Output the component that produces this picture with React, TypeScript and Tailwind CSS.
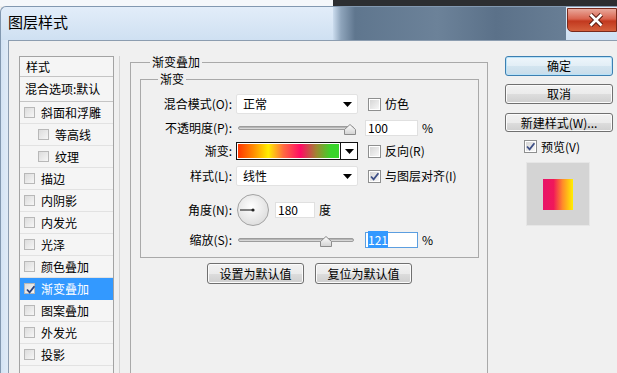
import React from "react";

const font = "font-['Noto_Sans_CJK_SC','Noto_Sans',sans-serif]";

function Arrow() {
  return (
    <svg width="9" height="5" viewBox="0 0 9 5">
      <polygon points="0,0 9,0 4.5,5" fill="#000" />
    </svg>
  );
}

function Tick({ color = "#3d4f86" }: { color?: string }) {
  return (
    <svg width="11" height="11" viewBox="0 0 11 11" className="absolute left-[0px] top-[0px]">
      <path d="M2 5.5 L4.6 8.3 L9.4 2.2" fill="none" stroke={color} strokeWidth="1.8" />
    </svg>
  );
}

function Check({ checked, small }: { checked?: boolean; small?: boolean }) {
  if (small) {
    return (
      <span className="relative block h-[11px] w-[11px] shrink-0 border border-[#b8b8b8] bg-[linear-gradient(135deg,#dcdcdc,#f6f6f6)]">
        {checked && <Tick color="#2a3f7a" />}
      </span>
    );
  }
  return (
    <span className="relative flex h-[13px] w-[13px] shrink-0 items-center justify-center border border-[#8e8f8f] bg-white p-[1px]">
      <span className="block h-full w-full bg-[linear-gradient(135deg,#d6d6d6,#f7f7f7)]" />
      {checked && <Tick />}
    </span>
  );
}

function Thumb({ left }: { left: string }) {
  return (
    <svg width="12" height="11" viewBox="0 0 12 11" className={`absolute top-[4px] ${left}`}>
      <defs>
        <linearGradient id="th" x1="0" y1="0" x2="0" y2="1">
          <stop offset="0" stopColor="#ffffff" />
          <stop offset="1" stopColor="#d2d2d2" />
        </linearGradient>
      </defs>
      <path d="M0.5 10.5 V5.5 L6 0.5 L11.5 5.5 V10.5 Z" fill="url(#th)" stroke="#8c8c8c" />
    </svg>
  );
}

function Slider({ left }: { left: string }) {
  return (
    <div className="relative flex h-[16px] w-[122px] items-center pl-[2px]">
      <div className="h-[4px] w-[116px] rounded-full border border-[#9c9c9c] bg-[linear-gradient(180deg,#a4a4a4,#e8e8e8)]" />
      <Thumb left={left} />
    </div>
  );
}

function Select({ value }: { value: string }) {
  return (
    <div className="flex h-[20px] w-[122px] items-center justify-between rounded-[2px] border border-[#e2e2e2] bg-white pl-[6px] pr-[5px] leading-none">
      <span>{value}</span>
      <Arrow />
    </div>
  );
}

function Btn({ children, w, h = "h-[21px]", focus }: { children: React.ReactNode; w: string; h?: string; focus?: boolean }) {
  return (
    <div
      className={`flex ${h} ${w} items-center justify-center rounded-[3px] border leading-none ${
        focus
          ? "border-[#3c7fb1] bg-[linear-gradient(180deg,#eef6fb_0%,#e2eef6_50%,#d3e5f0_51%,#c8dcea_100%)] shadow-[inset_0_0_0_1px_#b8e2f8]"
          : "border-[#707070] bg-[linear-gradient(180deg,#f2f2f2_0%,#ebebeb_50%,#dddddd_51%,#cfcfcf_100%)] shadow-[inset_0_0_0_1px_#fbfbfb]"
      }`}
    >
      {children}
    </div>
  );
}

const layers: { t: string; indent?: boolean; on?: boolean }[] = [
  { t: "斜面和浮雕" },
  { t: "等高线", indent: true },
  { t: "纹理", indent: true },
  { t: "描边" },
  { t: "内阴影" },
  { t: "内发光" },
  { t: "光泽" },
  { t: "颜色叠加" },
  { t: "渐变叠加", on: true },
  { t: "图案叠加" },
  { t: "外发光" },
  { t: "投影" },
];

export default function App() {
  return (
    <div className={`h-[373px] w-[617px] overflow-hidden bg-[#f0f0f0] text-[12px] text-black ${font}`}>
      {/* desktop strip */}
      <div className="flex h-[6px]">
        <div className="w-[333px] bg-[#f4f7fa]" />
        <div className="flex-1 bg-[#2c2e31]" />
      </div>

      {/* title bar */}
      <div className="flex h-[34px] rounded-tl-[6px] border-l border-t border-[#8298b0] bg-[linear-gradient(180deg,#e2edf9,#cfe0f2)]">
        <div className="pl-[7px] pt-[5px] text-[15px] leading-[20px]">图层样式</div>
        <div className="flex-1" />
        <div className="w-[233px] bg-[linear-gradient(90deg,#cbdcee_0px,#8ea4bb_8px,#5f768e_22px,#6c8299_45%,#5b7189_70%,#687e95_100%)]" />
        <div className="ml-[1px] mt-[1px] flex h-[24px] w-[50px] items-center rounded-bl-[5px] border border-[#7a2a1c] bg-[linear-gradient(180deg,#e9a89b_0%,#d9634e_45%,#c2391f_55%,#d5603c_100%)] pl-[20px]">
          <svg width="16" height="14" viewBox="0 0 16 14">
            <path d="M2.5 1.5 L13.5 12.5 M13.5 1.5 L2.5 12.5" stroke="#5a1a10" strokeWidth="4.6" />
            <path d="M2.5 1.5 L13.5 12.5 M13.5 1.5 L2.5 12.5" stroke="#ffffff" strokeWidth="2.6" />
          </svg>
        </div>
      </div>

      <div className="flex h-[333px]">
        <div className="w-[8px] border-l border-[#8298b0] bg-[linear-gradient(90deg,#d3e3f4,#e0ebf7)]" />
        <div className="flex flex-1 items-start border-l border-t border-[#8c9db0] bg-[#f0f0f0]">
          {/* styles list */}
          <div className="ml-[10px] mt-[15px] h-[330px] w-[95px] border border-[#a3a3a3] bg-[#f5f5f5]">
            <div className="h-[20px] border-b border-[#c4c4c4] pl-[6px] leading-[20px]">样式</div>
            <div className="h-[25px] border-b border-[#c4c4c4] pl-[5px] leading-[24px]">混合选项:默认</div>
            {layers.map((l) => (
              <div
                key={l.t}
                className={`flex h-[22px] items-center border-b ${l.indent ? "pl-[18px]" : "pl-[4px]"} ${
                  l.on ? "border-[#3399ff] bg-[#3399ff] text-white" : "border-[#e2e2e2]"
                }`}
              >
                <Check small checked={l.on} />
                <span className="ml-[6px] leading-none">{l.t}</span>
              </div>
            ))}
          </div>

          <div className="ml-[5px] mt-[15px] h-[320px] w-px bg-[#d2d2d2]" />

          {/* main panel */}
          <fieldset className="ml-[10px] mt-[13px] w-[358px] min-w-0 border border-[#a9a9a9] pb-[120px] pl-[9px] pr-[8px]">
            <legend className="ml-[10px] px-[2px] leading-[16px]">渐变叠加</legend>
            <fieldset className="mt-[1px] min-w-0 border border-[#a9a9a9] pb-[9px]">
              <legend className="ml-[17px] px-[2px] leading-[16px]">渐变</legend>

              <div className="mt-[7px] flex h-[20px] items-center">
                <div className="w-[95px] pr-[4px] text-right leading-none">混合模式(O):</div>
                <Select value="正常" />
                <span className="ml-[10px]"><Check /></span>
                <span className="ml-[4px] leading-none">仿色</span>
              </div>

              <div className="mt-[6px] flex h-[16px] items-center">
                <div className="w-[95px] pr-[4px] text-right leading-none">不透明度(P):</div>
                <Slider left="left-[108px]" />
                <div className="ml-[7px] h-[16px] w-[53px] border border-[#e0e0e0] bg-white pl-[2px] leading-[14px]">100</div>
                <span className="ml-[4px] leading-none">%</span>
              </div>

              <div className="mt-[6px] flex h-[18px] items-center">
                <div className="w-[95px] pr-[4px] text-right leading-none">渐变:</div>
                <div className="flex h-[18px] w-[122px] border border-[#111] bg-white">
                  <div className="m-[1px] flex-1 bg-[linear-gradient(90deg,#ff3500,#ff8a00_15%,#ffee00_30%,#ff6a40_45%,#ff0a64_62%,#9c8a30_78%,#38d42a_92%,#38d42a)]" />
                  <div className="flex w-[17px] items-center justify-center border-l border-[#111]">
                    <Arrow />
                  </div>
                </div>
                <span className="ml-[10px]"><Check /></span>
                <span className="ml-[4px] leading-none">反向(R)</span>
              </div>

              <div className="mt-[6px] flex h-[20px] items-center">
                <div className="w-[95px] pr-[4px] text-right leading-none">样式(L):</div>
                <Select value="线性" />
                <span className="ml-[10px]"><Check checked /></span>
                <span className="ml-[4px] leading-none">与图层对齐(I)</span>
              </div>

              <div className="mt-[7px] flex h-[34px] items-center">
                <div className="w-[95px] pr-[4px] text-right leading-none">角度(N):</div>
                <svg width="32" height="32" viewBox="0 0 32 32" className="ml-[1px]">
                  <defs>
                    <radialGradient id="dial" cx="0.45" cy="0.4" r="0.6">
                      <stop offset="0" stopColor="#ffffff" />
                      <stop offset="1" stopColor="#dedede" />
                    </radialGradient>
                  </defs>
                  <circle cx="16" cy="16" r="15.5" fill="url(#dial)" stroke="#a3a3a3" />
                  <line x1="3" y1="16" x2="16" y2="16" stroke="#333" strokeWidth="1.2" />
                  <circle cx="16" cy="16" r="1.6" fill="#222" />
                </svg>
                <div className="ml-[6px] h-[16px] w-[40px] border border-[#e0e0e0] bg-white pl-[2px] leading-[14px]">180</div>
                <span className="ml-[4px] leading-none">度</span>
              </div>

              <div className="mt-[5px] flex h-[16px] items-center">
                <div className="w-[95px] pr-[4px] text-right leading-none">缩放(S):</div>
                <Slider left="left-[84px]" />
                <div className="ml-[7px] h-[16px] w-[53px] border border-[#5b9ee0] bg-white pl-[2px] leading-[14px]">
                  <span className="bg-[#3399ff] text-white">121</span>
                </div>
                <span className="ml-[4px] leading-none">%</span>
              </div>
            </fieldset>

            <div className="mt-[5px] flex justify-center gap-[11px]">
              <Btn w="w-[97px]">设置为默认值</Btn>
              <Btn w="w-[97px]">复位为默认值</Btn>
            </div>
          </fieldset>

          {/* right column */}
          <div className="ml-[17px] mt-[15px] flex w-[108px] flex-col">
            <Btn w="w-[108px]" h="h-[20px]" focus>确定</Btn>
            <div className="mt-[8px]"><Btn w="w-[108px]" h="h-[20px]">取消</Btn></div>
            <div className="mt-[9px]"><Btn w="w-[108px]" h="h-[19px]">新建样式(W)...</Btn></div>
            <div className="mt-[8px] flex h-[13px] items-center pl-[19px]">
              <Check checked />
              <span className="ml-[4px] leading-none">预览(V)</span>
            </div>
            <div className="ml-[21px] mt-[9px] flex h-[64px] w-[64px] items-center justify-center border border-[#e6e6e6] bg-[#d4d4d4]">
              <div className="h-[31px] w-[30px] bg-[linear-gradient(90deg,#e8136a_0%,#f0185a_35%,#ff8a2a_65%,#fff000_100%)]" />
            </div>
          </div>
        </div>
      </div>
    </div>
  );
}
